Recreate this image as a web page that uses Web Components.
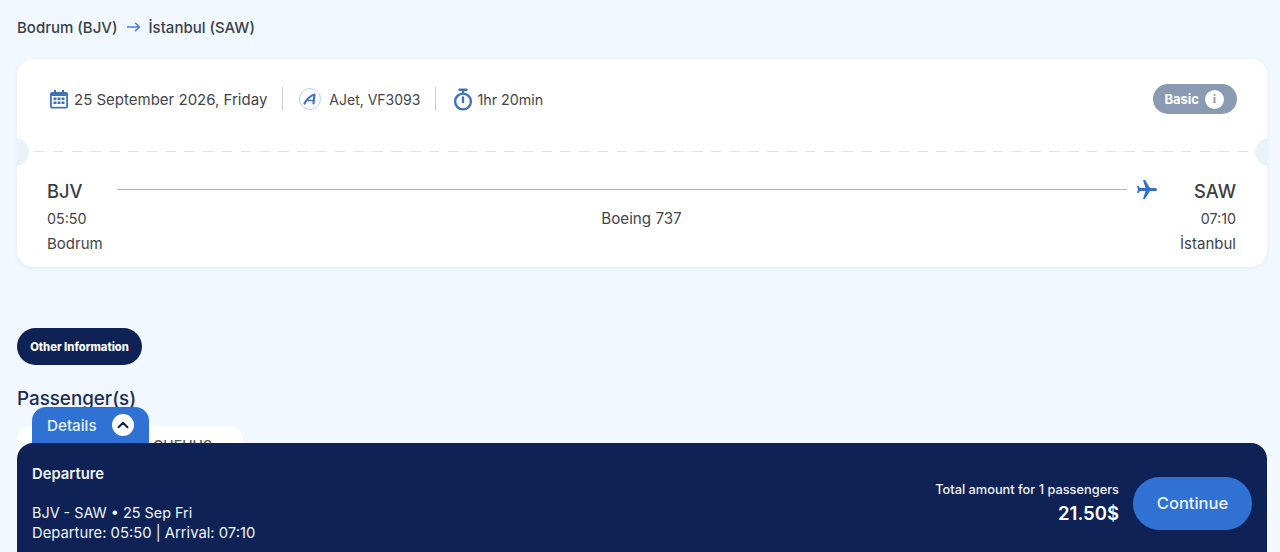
<!DOCTYPE html>
<html lang="en">
<head>
<meta charset="utf-8">
<title>Flight details</title>
<style>
  html, body { margin: 0; height: 100%; overflow: hidden; background: #f1f8ff; }
  body { font-family: Inter, "Liberation Sans", sans-serif; color: #33373f; }
</style>
</head>
<body>
<flight-page>
  <route-title from="Bodrum (BJV)" to="İstanbul (SAW)"></route-title>
  <ticket-card></ticket-card>
  <pill-tab>Other Information</pill-tab>
  <passenger-list></passenger-list>
</flight-page>
<summary-bar></summary-bar>

<script>
class FlightPage extends HTMLElement {
    constructor() {
        super();
        this.attachShadow({ mode: 'open' });
        this.shadowRoot.innerHTML = `
            <style>
                :host { display: flex; flex-direction: column; align-items: stretch; padding: 0 13px 0 17px; }
            </style>
            <slot></slot>
        `;
    }
}

class RouteTitle extends HTMLElement {
    constructor() {
        super();
        this.attachShadow({ mode: 'open' });
    }
    connectedCallback() {
        this.shadowRoot.innerHTML = `
            <style>
                :host { display: flex; align-items: center; gap: 8px; height: 59px; padding-bottom: 5px; box-sizing: border-box; font-size: 15px; font-weight: 500; color: #3b4048; }
                svg { display: block; }
            </style>
            <span>${this.getAttribute('from')}</span>
            <svg width="15" height="12" viewBox="0 0 15 12" fill="none" stroke="#3f7fd6" stroke-width="1.5" stroke-linecap="round" stroke-linejoin="round"><path d="M1.500 6h12M9.500 2.200 13.500 6l-4 3.800"/></svg>
            <span>${this.getAttribute('to')}</span>
        `;
    }
}

class TicketCard extends HTMLElement {
    constructor() {
        super();
        this.attachShadow({ mode: 'open' });
        this.shadowRoot.innerHTML = `
            <style>
                :host { display: block; position: relative; height: 208px; background: #fff; border-radius: 16px; box-shadow: 0 1px 4px rgba(120,150,190,.12); overflow: hidden; font-size: 15px; color: #41454c; }
                .top { display: flex; align-items: center; height: 80px; padding: 0 30px 0 32px; box-sizing: border-box; }
                .meta { display: flex; align-items: center; gap: 5px; height: 24px; }
                .meta + .meta { border-left: 1px solid #c9cdd2; margin-left: 15px; padding-left: 15px; }
                .meta.air { gap: 8px; font-size: 14px; padding-left: 16px; }
                .meta.time { gap: 4px; font-size: 14.300px; padding-left: 17px; }
                .badge { margin-left: auto; display: flex; align-items: center; gap: 6px; height: 30px; padding: 0 13px 0 11px; border-radius: 15px; background: #8a9ab3; color: #fff; font-size: 13px; font-weight: 700; }
                .info { width: 19px; height: 19px; border-radius: 50%; background: #fff; color: #8a9ab3; display: flex; align-items: center; justify-content: center; font-size: 12px; font-weight: 700; font-family: "Liberation Serif", serif; }
                .dash { height: 1px; margin: 12px 17px 0; background: repeating-linear-gradient(90deg, #dfe3e8 0 10.500px, transparent 10.500px 18.800px); }
                .notch { position: absolute; top: 79px; width: 28px; height: 28px; border-radius: 50%; background: #e9f1f9; }
                .notch.l { left: -16px; }
                .notch.r { right: -16px; }
                .legs { display: grid; grid-template-columns: 1fr auto 1fr; padding: 26px 31px 0 30px; position: relative; }
                .port { display: flex; flex-direction: column; }
                .port.end { align-items: flex-end; }
                .code { font-size: 18.300px; font-weight: 500; line-height: 26px; color: #3a3e46; }
                .clock { line-height: 24px; margin-top: 3px; font-size: 14.300px; }
                .city { line-height: 24px; margin-top: 1px; font-size: 15px; }
                .plane { font-size: 15.200px; align-self: start; margin-top: 29px; line-height: 24px; }
                .line { position: absolute; left: 100px; right: 140px; top: 37px; height: 1px; background: #9dbad8; }
                .jet { position: absolute; right: 108px; top: 26px; }
                svg { display: block; }
            </style>
            <div class="top">
                <div class="meta">
                    <svg width="20" height="20" viewBox="0 0 20 20"><path fill="#3d72bd" d="M5 1h2v2h6V1h2v2h2a2 2 0 0 1 2 2v12.500a2 2 0 0 1-2 2H3a2 2 0 0 1-2-2V5a2 2 0 0 1 2-2h2z"/><rect x="2.800" y="7" width="14.400" height="10.800" fill="#fff"/><g fill="#3d72bd"><rect x="4.500" y="8.500" width="3" height="2.500"/><rect x="8.500" y="8.500" width="3" height="2.500"/><rect x="12.500" y="8.500" width="3" height="2.500"/><rect x="4.500" y="12.500" width="3" height="2.500"/><rect x="8.500" y="12.500" width="3" height="2.500"/><rect x="12.500" y="12.500" width="3" height="2.500"/></g></svg>
                    <span>25 September 2026, Friday</span>
                </div>
                <div class="meta air">
                    <svg width="22" height="22" viewBox="0 0 22 22" fill="none"><circle cx="11" cy="11" r="10.500" stroke="#b9d1ee"/><path d="M5.500 15.500C8 11 11.500 7.500 15.500 6.500L14.500 15.500" stroke="#3d72bd" stroke-width="2.200" stroke-linecap="round" stroke-linejoin="round"/><path d="M8.500 12.500h5.500" stroke="#3d72bd" stroke-width="1.600"/></svg>
                    <span>AJet, VF3093</span>
                </div>
                <div class="meta time">
                    <svg width="20" height="23" viewBox="0 0 20 23" fill="none" stroke="#3d72bd" stroke-width="2.400" stroke-linecap="round"><circle cx="10" cy="13.500" r="7.900"/><path d="M6.500 1.800h7M10 2v3M10 9.500v4.500"/></svg>
                    <span>1hr 20min</span>
                </div>
                <div class="badge"><span>Basic</span><span class="info">i</span></div>
            </div>
            <div class="dash"></div>
            <span class="notch l"></span><span class="notch r"></span>
            <div class="legs">
                <div class="port">
                    <span class="code">BJV</span>
                    <span class="clock">05:50</span>
                    <span class="city">Bodrum</span>
                </div>
                <span class="plane">Boeing 737</span>
                <div class="port end">
                    <span class="code">SAW</span>
                    <span class="clock">07:10</span>
                    <span class="city">İstanbul</span>
                </div>
                <span class="line"></span>
                <svg class="jet" width="24" height="24" viewBox="0 0 24 24"><path fill="#2f6fd0" transform="rotate(90 12 12)" d="M21 16v-2l-8-5V3.500c0-.83-.67-1.500-1.500-1.500S10 2.670 10 3.500V9l-8 5v2l8-2.500V19l-2 1.500V22l3.500-1 3.500 1v-1.500L13 19v-5.500z"/></svg>
            </div>
        `;
    }
}

class PillTab extends HTMLElement {
    constructor() {
        super();
        this.attachShadow({ mode: 'open' });
        this.shadowRoot.innerHTML = `
            <style>
                :host { display: flex; align-items: center; justify-content: center; align-self: flex-start; width: 125px; height: 37px; margin-top: 61px; border-radius: 19px; background: #0f2256; color: #fff; font-size: 11.200px; font-weight: 800; }
            </style>
            <slot></slot>
        `;
    }
}

class PassengerList extends HTMLElement {
    constructor() {
        super();
        this.attachShadow({ mode: 'open' });
        this.shadowRoot.innerHTML = `
            <style>
                :host { display: block; margin-top: 22px; }
                h2 { margin: 0; font-size: 18.800px; font-weight: 500; line-height: 24px; color: #1a2b58; }
                .card { width: 226px; height: 60px; margin-top: 15px; background: #fff; border-radius: 14px; padding: 11px 31px 0 0; box-sizing: border-box; font-size: 14px; font-weight: 500; color: #555a63; text-align: right; }
            </style>
            <h2>Passenger(s)</h2>
            <div class="card">GUEHUS</div>
        `;
    }
}

class SummaryBar extends HTMLElement {
    constructor() {
        super();
        this.attachShadow({ mode: 'open' });
        this.shadowRoot.innerHTML = `
            <style>
                :host { position: fixed; left: 17px; right: 13px; bottom: 0; height: 109px; display: block; }
                .tab { position: absolute; left: 15px; top: -36px; width: 117px; height: 50px; box-sizing: border-box; padding: 0 15px 14px 15px; background: #2f72d4; border-radius: 14px 14px 0 0; display: flex; align-items: center; justify-content: space-between; color: #e9f1fb; font-size: 15.200px; font-weight: 500; }
                .toggle { width: 22px; height: 22px; border-radius: 50%; background: #fff; display: flex; align-items: center; justify-content: center; }
                .panel { position: absolute; inset: 0; background: #0f2256; border-radius: 16px 16px 0 0; display: flex; align-items: flex-start; color: #eef2f8; padding: 0 15px; box-sizing: border-box; }
                .trip { display: flex; flex-direction: column; font-size: 14.800px; line-height: 20px; }
                .trip b { font-weight: 600; margin-top: 21px; margin-bottom: 19px; }
                .trip .leg { font-size: 14.400px; }
                .total { margin-left: auto; margin-top: 39px; display: flex; flex-direction: column; align-items: flex-end; }
                .total small { font-size: 12.800px; line-height: 16px; font-weight: 500; }
                .total strong { font-size: 18.500px; line-height: 24px; font-weight: 600; color: #fff; margin-top: 3px; }
                button { margin: 34px 0 0 14px; padding: 0 0 2px; width: 119px; height: 53px; border: 0; border-radius: 27px; background: #2f72d4; color: #e9f1fb; font: 500 16.500px Inter, "Liberation Sans", sans-serif; }
                svg { display: block; }
            </style>
            <div class="tab">
                <span>Details</span>
                <span class="toggle"><svg width="12" height="8" viewBox="0 0 12 8" fill="none" stroke="#0f2256" stroke-width="2" stroke-linecap="round" stroke-linejoin="round"><path d="M1.500 6.300 6 1.800l4.500 4.500"/></svg></span>
            </div>
            <div class="panel">
                <div class="trip">
                    <b>Departure</b>
                    <span class="leg">BJV - SAW • 25 Sep Fri</span>
                    <span>Departure: 05:50 | Arrival: 07:10</span>
                </div>
                <div class="total">
                    <small>Total amount for 1 passengers</small>
                    <strong>21.50$</strong>
                </div>
                <button type="button">Continue</button>
            </div>
        `;
    }
}

customElements.define('flight-page', FlightPage);
customElements.define('route-title', RouteTitle);
customElements.define('ticket-card', TicketCard);
customElements.define('pill-tab', PillTab);
customElements.define('passenger-list', PassengerList);
customElements.define('summary-bar', SummaryBar);
</script>
</body>
</html>
